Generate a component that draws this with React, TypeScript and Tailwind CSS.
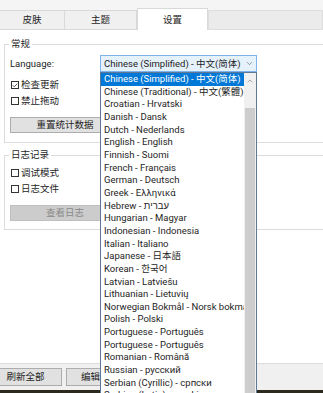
import React from 'react';
import { ChevronDown, ChevronUp, Check } from 'lucide-react';

const languages = [
  'Chinese (Simplified) - 中文(简体)',
  'Chinese (Traditional) - 中文(繁體)',
  'Croatian - Hrvatski',
  'Danish - Dansk',
  'Dutch - Nederlands',
  'English - English',
  'Finnish - Suomi',
  'French - Français',
  'German - Deutsch',
  'Greek - Ελληνικά',
  'Hebrew - עברית',
  'Hungarian - Magyar',
  'Indonesian - Indonesia',
  'Italian - Italiano',
  'Japanese - 日本語',
  'Korean - 한국어',
  'Latvian - Latviešu',
  'Lithuanian - Lietuvių',
  'Norwegian Bokmål - Norsk bokmål',
  'Polish - Polski',
  'Portuguese - Português',
  'Portuguese - Português',
  'Romanian - Română',
  'Russian - русский',
  'Serbian (Cyrillic) - српски',
  'Serbian (Latin) - srpski',
];

const CheckRow: React.FC<{ label: string; checked?: boolean }> = ({ label, checked }) => (
  <div className="flex items-center h-[16px] pl-[6px] gap-[2px]">
    <div className="w-[8px] h-[8px] border border-[#333] bg-white flex items-center justify-center">
      {checked && <Check size={7} strokeWidth={3} className="text-[#222]" />}
    </div>
    <span>{label}</span>
  </div>
);

const Tab: React.FC<{ label: string; w: string; active?: boolean }> = ({ label, w, active }) =>
  active ? (
    <div className={`${w} h-[22px] bg-white border border-b-0 border-[#d9d9d9] flex items-center justify-center`}>{label}</div>
  ) : (
    <div className={`${w} h-[20px] bg-[#f0f0f0] border border-[#d9d9d9] border-l-0 flex items-center justify-center`}>{label}</div>
  );

export default function App() {
  return (
    <div className="w-[323px] h-[393px] relative overflow-hidden bg-[#f5f5f5] text-[9.5px] text-[#1e1e1e] font-['Roboto','Noto_Sans_CJK_SC',sans-serif] leading-none">
      <div className="h-[8px]" />
      <div className="flex items-end h-[22px]">
        <Tab label="皮肤" w="w-[65px]" />
        <Tab label="主题" w="w-[72px]" />
        <Tab label="设置" w="w-[71px]" active />
        <div className="flex-1 h-[20px] bg-[#ebebeb] border border-[#dedede]" />
      </div>

      <div className="h-[333px] bg-white pl-[4px] pt-[8px]">
        <fieldset className="border border-[#dcdcdc] -mr-[20px] pb-[9px]">
          <legend className="ml-[4px] px-[2px] leading-[12px]">常规</legend>
          <div className="flex items-center h-[17px] mt-[5px]">
            <span className="w-[95px] pl-[5px]">Language:</span>
            <div className="w-[157px] h-[17px] bg-[#e5f1fb] border border-[#7eb4ea] flex items-center justify-between pl-[3px] pr-[2px]">
              <span>Chinese (Simplified) - 中文(简体)</span>
              <ChevronDown size={9} strokeWidth={1.5} className="text-[#555]" />
            </div>
          </div>
          <div className="mt-[5px]">
            <CheckRow label="检查更新" checked />
            <CheckRow label="禁止拖动" />
          </div>
          <div className="ml-[5px] mt-[8px] w-[110px] h-[16px] bg-[#e1e1e1] border border-[#adadad] flex items-center justify-center">
            重置统计数据
          </div>
        </fieldset>

        <fieldset className="border border-[#dcdcdc] -mr-[20px] mt-[6px] pb-[8px]">
          <legend className="ml-[4px] px-[2px] leading-[12px]">日志记录</legend>
          <div className="mt-[4px]">
            <CheckRow label="调试模式" />
            <CheckRow label="日志文件" />
          </div>
          <div className="ml-[5px] mt-[8px] w-[110px] h-[16px] bg-[#cccccc] border border-[#bfbfbf] text-[#8a8a8a] flex items-center justify-center">
            查看日志
          </div>
        </fieldset>
      </div>

      <div className="h-[27px] bg-[#f0f0f0] border-t border-[#dcdcdc] flex items-center gap-[4px] -ml-[12px]">
        <div className="w-[74px] h-[18px] bg-[#e1e1e1] border border-[#adadad] flex items-center justify-center pl-[1px]">刷新全部</div>
        <div className="w-[68px] h-[18px] bg-[#e1e1e1] border border-[#adadad] flex items-center justify-center">编辑配置</div>
      </div>
      <div className="h-[3px] bg-[#2c2a1e]" />

      {/* open dropdown list */}
      <div className="absolute left-[100px] top-[72px] w-[157px] h-[330px] bg-white border border-[#5e7896] flex">
        <div className="flex-1 overflow-hidden">
          {languages.map((l, i) => (
            <div
              key={i}
              className={`h-[12.67px] leading-[12.67px] pl-[3px] whitespace-nowrap ${i === 0 ? 'bg-[#0078d7] text-white' : ''}`}
            >
              {l}
            </div>
          ))}
        </div>
        <div className="w-[12px] bg-[#f0f0f0] flex flex-col">
          <div className="h-[16px] flex items-center justify-center">
            <ChevronUp size={8} strokeWidth={1.5} className="text-[#606060]" />
          </div>
          <div className="h-[19px]" />
          <div className="flex-1 bg-[#cdcdcd] mx-[1px]" />
        </div>
      </div>
    </div>
  );
}
